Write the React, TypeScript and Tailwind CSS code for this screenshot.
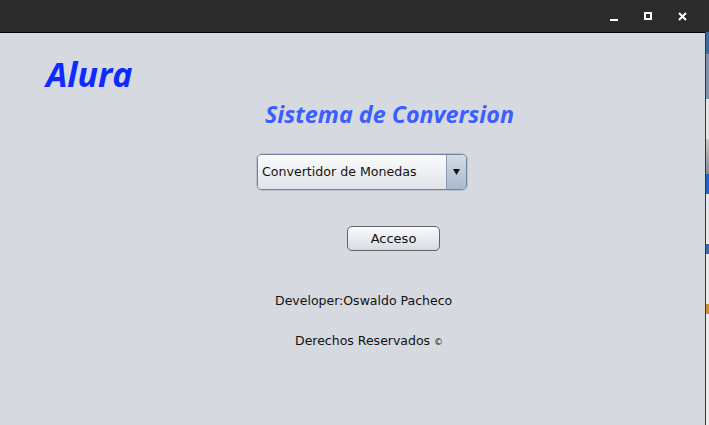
import React from "react";

export default function App() {
  return (
    <div className="w-[709px] h-[425px] flex bg-[#d6d9df] overflow-hidden" style={{ fontFamily: '"DejaVu Sans", sans-serif' }}>
      <div className="w-[705px] h-full flex flex-col">
        <div className="h-[32px] bg-[#2b2b2b] flex items-center justify-end pr-[18px] gap-[26px] shrink-0">
          <div className="w-[8px] h-[10px] flex items-end"><div className="w-[8px] h-[2px] bg-white" /></div>
          <div className="w-[8px] h-[8px] border-2 border-white" />
          <svg width="9" height="9" viewBox="0 0 9 9"><path d="M1 1L8 8M8 1L1 8" stroke="white" strokeWidth="2" /></svg>
        </div>
        <div className="h-px bg-black shrink-0" />
        <div className="flex-1 flex flex-col">
          <div className="pl-[46px] pt-[18px] h-[52px] text-[34px] leading-[46px] font-bold italic text-[#0d2bff]" style={{ fontFamily: '"Open Sans", sans-serif' }}>Alura</div>
          <div className="pl-[265px] mt-[14px] text-[23.3px] leading-[30px] font-bold italic text-[#3d5eff]" style={{ fontFamily: '"Open Sans", sans-serif' }}>Sistema de Conversion</div>
          <div className="pl-[257px] mt-[25px]">
            <div className="w-[210px] h-[36px] rounded-[5px] border border-[#6f84a3] flex overflow-hidden shadow-[0_0_0_1px_rgba(120,140,170,0.3)]">
              <div className="flex-1 flex items-center pl-[4px] text-[12.6px] text-[#111] bg-gradient-to-b from-[#fbfbfc] to-[#e0e3e8]">Convertidor de Monedas</div>
              <div className="w-[20px] border-l border-[#8c9bb1] flex items-center justify-center bg-gradient-to-b from-[#d3dbe6] to-[#a9b9cd]">
                <svg width="7" height="6" viewBox="0 0 7 6"><path d="M0 0H7L3.5 6Z" fill="#111" /></svg>
              </div>
            </div>
          </div>
          <div className="pl-[347px] mt-[36px]">
            <div className="w-[93px] h-[25px] rounded-[5px] border border-[#5f6269] flex items-center justify-center text-[13px] text-[#111] bg-gradient-to-b from-[#fbfbfc] to-[#d8dbe0]">Acceso</div>
          </div>
          <div className="pl-[275px] mt-[41px] text-[12.5px] leading-[18px] text-[#111]">Developer:Oswaldo Pacheco</div>
          <div className="pl-[295px] mt-[22px] text-[12.5px] leading-[18px] text-[#111]">Derechos Reservados <span className="text-[9px]">©</span></div>
        </div>
      </div>
      <div className="w-px h-full bg-[#333]" />
      <div className="w-[3px] h-full flex flex-col">
        <div className="h-[32px] bg-[#2b2b2b]" />
        <div className="h-[22px] bg-[#3a6aa8]" />
        <div className="h-[45px] bg-[#7d93ad]" />
        <div className="h-[40px] bg-[#e4e4e4]" />
        <div className="h-[35px] bg-gradient-to-b from-[#c8c8c8] to-[#8a8a8a]" />
        <div className="h-[20px] bg-[#1866c8]" />
        <div className="h-[50px] bg-[#e8e8e8]" />
        <div className="h-[10px] bg-[#3a6ab0]" />
        <div className="h-[50px] bg-[#ececec]" />
        <div className="h-[10px] bg-[#d09020]" />
        <div className="flex-1 bg-[#eeeeee]" />
      </div>
    </div>
  );
}
